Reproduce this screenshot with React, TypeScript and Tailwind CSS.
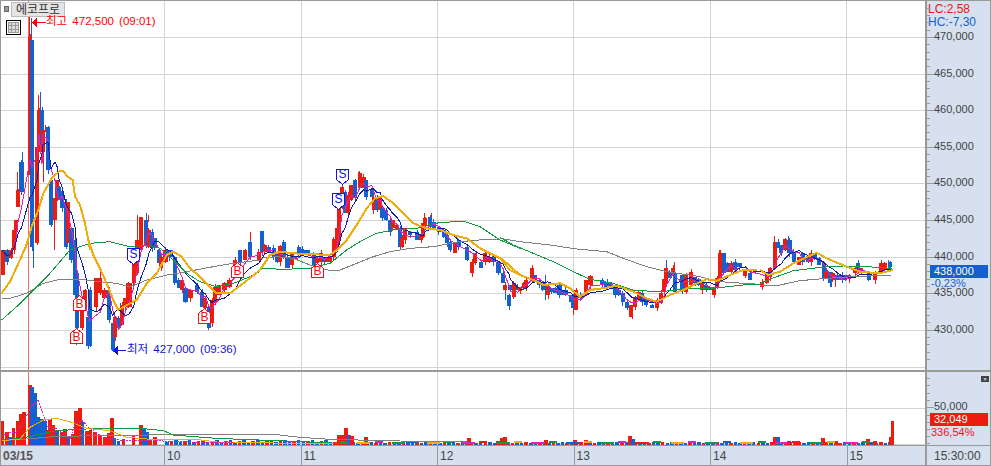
import React from "react";

type Row = [number, number, number, number, string];
type C = { x: number; w: number; t: number; b: number; c: string };

const seg = (ox: number, oy: number, rows: Row[], s = 3): C[] =>
  rows.map(([a, b, t, bo, c]) => ({ x: ox + a / s, w: Math.max(4, (b - a) / s), t: oy + t / s, b: oy + bo / s, c }));

const candles: C[] = [
  ...seg(0, 0, [
    [0, 5, 250, 275, "r"], [5, 8, 250, 262, "b"], [9, 12, 250, 258, "r"], [12, 15, 230, 250, "r"], [14, 17, 220, 232, "r"],
    [16, 19, 190, 207, "r"], [19, 24, 162, 192, "b"], [28, 30, 37, 175, "r"], [30, 33, 40, 247, "b"], [35, 38, 147, 243, "r"],
    [37, 40, 110, 152, "r"], [40, 42, 110, 152, "b"], [41, 45, 130, 152, "r"], [46, 49, 127, 170, "b"], [49, 53, 180, 225, "b"],
    [53, 56, 198, 220, "r"], [55, 57, 180, 198, "r"], [57, 60, 187, 198, "b"], [60, 63, 191, 208, "b"], [64, 67, 202, 247, "b"],
    [66, 69, 202, 243, "r"], [69, 74, 228, 260, "b"], [73, 77, 240, 295, "b"],
  ], 1),
  ...seg(0, 240, [
    [225, 233, 100, 265, "b"], [240, 250, 180, 265, "r"], [250, 258, 150, 200, "r"], [258, 266, 230, 318, "b"], [264, 275, 150, 318, "b"],
    [283, 295, 115, 200, "r"], [295, 305, 115, 160, "r"], [305, 320, 150, 175, "r"], [322, 330, 150, 240, "b"], [332, 340, 250, 330, "b"],
    [340, 350, 230, 290, "r"], [350, 358, 235, 265, "b"], [360, 370, 195, 255, "r"], [370, 378, 175, 200, "r"], [378, 395, 130, 200, "r"],
    [395, 405, 70, 130, "r"], [405, 415, 0, 100, "r"], [418, 430, -69, 30, "r"], [432, 442, -60, 15, "b"], [440, 448, -30, 20, "r"],
    [450, 458, -25, 25, "b"], [458, 470, -5, 25, "b"], [470, 480, 30, 70, "b"], [478, 490, 50, 85, "r"], [490, 503, 30, 65, "r"],
    [497, 520, 30, 50, "b"], [518, 530, 50, 130, "b"], [530, 540, 120, 145, "b"], [540, 550, 120, 150, "r"], [550, 565, 145, 185, "b"],
    [565, 580, 150, 175, "r"], [585, 595, 135, 155, "b"], [600, 610, 155, 200, "b"], [610, 620, 175, 205, "r"], [620, 630, 200, 265, "b"],
    [630, 640, 180, 250, "r"], [640, 650, 140, 190, "r"], [650, 660, 135, 165, "r"], [665, 680, 130, 150, "r"], [680, 695, 120, 140, "r"],
    [700, 710, 60, 100, "r"], [715, 725, 30, 65, "b"], [730, 740, 30, 60, "r"], [745, 755, 5, 50, "b"], [770, 780, 35, 60, "r"],
  ]),
  ...seg(260, 160, [
    [0, 8, 213, 275, "b"], [8, 20, 255, 275, "r"], [20, 30, 260, 275, "b"], [35, 45, 265, 290, "b"], [45, 55, 275, 305, "b"],
    [55, 65, 258, 305, "r"], [65, 75, 245, 290, "b"], [75, 90, 290, 325, "b"], [90, 100, 280, 315, "r"], [100, 110, 290, 295, "r"],
    [110, 120, 260, 280, "b"], [120, 132, 268, 282, "b"], [132, 150, 270, 285, "b"], [155, 165, 280, 315, "b"], [165, 178, 295, 310, "r"],
    [178, 190, 280, 305, "r"], [186, 195, 290, 305, "b"], [195, 215, 290, 305, "r"], [215, 225, 238, 290, "r"], [224, 238, 205, 270, "r"],
    [232, 242, 140, 240, "r"], [240, 250, 80, 140, "r"], [250, 258, 95, 160, "b"], [258, 270, 105, 160, "r"], [268, 280, 75, 120, "r"],
    [280, 290, 60, 115, "b"], [293, 305, 40, 85, "r"], [305, 315, 50, 85, "r"], [312, 322, 60, 110, "b"], [330, 338, 90, 110, "b"],
    [335, 345, 110, 150, "r"], [345, 355, 115, 150, "b"], [355, 365, 110, 150, "r"], [360, 370, 145, 175, "b"], [372, 382, 150, 180, "b"],
    [385, 395, 180, 215, "b"], [392, 400, 180, 205, "r"], [405, 415, 195, 210, "r"], [415, 425, 205, 260, "b"], [420, 430, 235, 260, "r"],
    [430, 440, 205, 240, "r"], [445, 455, 215, 225, "b"], [465, 478, 215, 240, "b"], [478, 485, 225, 240, "r"], [484, 492, 190, 230, "r"],
    [490, 500, 175, 195, "r"], [505, 515, 170, 200, "b"], [515, 525, 185, 205, "b"], [530, 540, 200, 215, "b"], [545, 555, 210, 230, "b"],
    [555, 565, 225, 250, "b"], [565, 575, 245, 270, "b"], [580, 590, 250, 280, "r"], [590, 600, 240, 260, "b"], [615, 625, 260, 300, "b"],
    [630, 640, 305, 338, "r"], [640, 650, 280, 310, "r"], [658, 668, 305, 325, "b"], [670, 680, 280, 305, "r"], [680, 695, 290, 305, "r"],
    [695, 705, 285, 305, "b"], [708, 722, 305, 340, "b"], [724, 735, 340, 370, "b"], [730, 740, 375, 390, "r"], [745, 755, 375, 390, "b"],
  ]),
  ...seg(500, 220, [
    [22, 32, 225, 257, "b"], [35, 45, 190, 232, "r"], [47, 55, 200, 210, "b"], [55, 65, 200, 212, "r"], [65, 75, 190, 205, "r"],
    [72, 85, 180, 200, "r"], [90, 100, 145, 180, "r"], [100, 110, 165, 185, "b"], [112, 122, 180, 195, "b"], [122, 132, 190, 210, "b"],
    [138, 148, 198, 225, "r"], [148, 158, 205, 215, "b"], [160, 172, 205, 220, "b"], [172, 185, 195, 225, "b"], [185, 205, 210, 225, "b"],
    [208, 218, 225, 245, "b"], [213, 223, 225, 265, "b"], [223, 233, 210, 270, "r"], [235, 250, 225, 235, "b"], [252, 265, 180, 225, "r"],
    [265, 280, 167, 195, "r"], [300, 312, 180, 195, "b"], [312, 335, 187, 205, "b"], [340, 350, 205, 225, "b"], [350, 360, 210, 225, "b"],
    [362, 375, 220, 245, "b"], [375, 385, 245, 265, "b"], [388, 398, 255, 290, "r"], [400, 412, 232, 260, "r"], [410, 420, 215, 240, "r"],
    [420, 430, 220, 245, "b"], [432, 442, 235, 255, "b"], [450, 462, 255, 265, "b"], [465, 475, 240, 265, "r"], [477, 487, 220, 250, "r"],
    [487, 497, 178, 215, "r"], [493, 503, 145, 190, "r"], [503, 513, 155, 175, "b"], [513, 523, 145, 165, "r"], [520, 530, 160, 215, "b"],
    [540, 548, 165, 210, "b"], [553, 563, 165, 215, "r"], [568, 580, 155, 195, "r"], [580, 590, 170, 190, "b"], [590, 600, 180, 195, "b"],
    [600, 610, 190, 210, "r"], [612, 622, 195, 210, "b"], [625, 635, 200, 210, "b"], [637, 647, 205, 225, "r"], [645, 655, 175, 205, "r"],
    [655, 665, 100, 175, "r"], [665, 675, 100, 160, "b"], [675, 685, 130, 155, "b"], [688, 697, 130, 155, "r"], [700, 710, 125, 150, "b"],
    [712, 725, 130, 140, "b"], [730, 740, 150, 168, "r"], [745, 755, 160, 180, "b"],
  ]),
  ...seg(760, 230, [
    [0, 8, 155, 170, "r"], [14, 24, 130, 160, "r"], [24, 36, 115, 140, "r"], [38, 48, 35, 115, "r"], [48, 58, 35, 55, "b"],
    [58, 68, 45, 70, "b"], [70, 82, 28, 60, "r"], [82, 95, 30, 70, "b"], [95, 108, 65, 95, "b"], [112, 122, 80, 105, "r"],
    [122, 132, 70, 95, "b"], [138, 148, 80, 95, "b"], [148, 160, 70, 95, "r"], [158, 170, 70, 85, "b"], [172, 182, 85, 105, "b"],
    [185, 195, 100, 145, "b"], [192, 202, 125, 145, "r"], [204, 214, 125, 160, "b"], [212, 222, 130, 150, "r"], [225, 240, 135, 150, "b"],
    [240, 250, 135, 150, "b"], [250, 262, 135, 150, "b"], [262, 272, 135, 148, "r"], [280, 290, 115, 130, "r"], [288, 298, 100, 120, "b"],
    [298, 306, 115, 125, "r"], [320, 330, 125, 150, "b"], [340, 350, 130, 150, "r"], [358, 368, 100, 125, "r"], [368, 378, 100, 120, "r"],
    [385, 395, 95, 110, "b"],
  ]),
];

const wicks: [number, number, number, string][] = [
  [29, 14, 37, "r"], [31.5, 18, 40, "b"], [38.5, 95, 110, "r"], [40.5, 92, 110, "b"], [45, 125, 132, "r"], [22, 152, 162, "b"],
  [17.5, 172, 190, "r"], [54.5, 220, 250, "r"], [43, 150, 182, "r"], [33.5, 240, 268, "b"], [76.5, 328, 345, "b"], [137, 215, 240, "r"],
  [146, 213, 220, "b"], [113, 345, 352, "b"], [208, 325, 330, "r"], [424, 213, 220, "r"], [431, 213, 220, "r"], [100, 272, 280, "r"],
  [505, 290, 300, "b"], [545, 275, 300, "b"], [573, 300, 315, "r"], [632, 305, 319, "r"], [666, 260, 268, "b"], [674, 262, 270, "r"],
  [719, 250, 256, "r"], [774, 236, 250, "r"], [788, 236, 245, "b"], [831, 275, 287, "b"], [835, 278, 287, "r"], [884, 262, 268, "r"],
  [888, 260, 266, "b"], [250, 232, 240, "r"], [342, 180, 190, "b"], [358, 172, 176, "r"], [120, 303, 315, "b"], [148, 215, 222, "r"],
];

const poly = (ox: number, oy: number, pts: number[][]) => pts.map(([x, y]) => `${ox + x / 3},${oy + y / 3}`).join(" ");

const orange = [
  poly(0, 240, [[5, 160], [30, 125], [60, 60], [85, 0]]),
  poly(0, 130, [[75, 360], [95, 290], [115, 240], [130, 190], [155, 145], [180, 122], [190, 122], [200, 138], [218, 150], [225, 200], [240, 225], [255, 280], [265, 330], [270, 360]]),
  poly(0, 240, [[265, 0], [280, 45], [300, 85], [320, 130], [340, 180], [355, 210], [375, 198], [410, 180], [440, 130], [470, 100], [500, 45], [520, 35], [545, 50], [570, 85], [600, 110], [630, 140], [650, 160], [690, 160], [730, 130], [780, 90]]),
  poly(260, 160, [[0, 330], [30, 285], [60, 275], [100, 280], [210, 285], [230, 270], [260, 240], [290, 195], [320, 145], [345, 115], [370, 108], [400, 130], [430, 160], [460, 190], [500, 205], [540, 210], [580, 225], [620, 235], [660, 265], [700, 285], [730, 300], [780, 345]]),
  poly(500, 220, [[0, 115], [30, 150], [60, 165], [100, 180], [130, 195], [180, 190], [210, 205], [240, 230], [270, 210], [320, 203], [350, 197], [400, 215], [440, 235], [470, 245], [510, 225], [550, 210], [580, 195], [620, 178], [650, 182], [690, 165], [730, 150], [770, 150]]),
  poly(760, 230, [[0, 120], [25, 135], [60, 125], [100, 100], [170, 68], [200, 85], [260, 110], [300, 125], [360, 130], [398, 120]]),
];
const gray = [
  poly(0, 240, [[5, 175], [30, 175], [80, 160], [130, 130], [180, 118], [240, 118], [300, 125], [350, 130], [390, 140], [440, 120], [500, 105], [560, 95], [640, 80], [700, 70], [780, 60]]),
  poly(260, 160, [[0, 295], [50, 290], [100, 295], [150, 315], [210, 332], [240, 330], [290, 310], [340, 290], [390, 275], [450, 265], [520, 260], [600, 245], [680, 238], [720, 240]]),
  poly(500, 220, [[0, 55], [60, 65], [150, 75], [230, 87], [320, 95], [370, 115], [440, 140], [500, 155], [600, 170], [660, 185], [730, 190], [780, 193]]),
  poly(760, 230, [[0, 165], [60, 165], [120, 152], [200, 145], [280, 140], [395, 135]]),
];
const green = [
  poly(0, 240, [[5, 240], [50, 200], [100, 150], [150, 100], [210, 30], [270, 10], [330, 5], [390, 20], [440, 15], [480, 25], [520, 60], [560, 100], [600, 125], [650, 140], [700, 130], [750, 110], [780, 95]]),
  poly(260, 160, [[0, 325], [70, 328], [150, 325], [210, 310], [260, 270], [300, 245], [350, 220], [400, 210], [470, 205], [520, 190], [610, 183], [660, 200], [720, 240], [780, 265]]),
  poly(500, 220, [[0, 52], [40, 75], [100, 100], [160, 125], [220, 155], [270, 178], [340, 190], [400, 210], [480, 216], [560, 205], [640, 205], [730, 195], [780, 192]]),
  poly(760, 230, [[0, 160], [50, 140], [100, 122], [180, 112], [250, 108], [320, 110], [395, 115]]),
];

const sorted = [...candles].sort((a, b) => a.x - b.x);
const mids = sorted.map((c) => ({ x: c.x + c.w / 2, y: c.c === "r" ? c.t : c.b }));
const sma = (n: number) =>
  mids
    .map((_, i) => {
      const from = Math.max(0, i - n + 1);
      const part = mids.slice(from, i + 1);
      const y = part.reduce((s, p) => s + p.y, 0) / part.length;
      return `${mids[i].x.toFixed(1)},${y.toFixed(1)}`;
    })
    .join(" ");

const vLines = [164, 301, 437, 573, 710, 846];
const prices = [470, 465, 460, 455, 450, 445, 440, 435, 430];
const priceY = (p: number) => 37 + ((470 - p) / 5) * 36.6;

const RED = "#ec1c0e";
const BLUE = "#1560cf";

type Vol = [number, number, string];
const v4: Vol[] = [
  [0, 185, "r"], [15, 218, "r"], [25, 235, "b"], [35, 207, "r"], [47, 185, "r"], [62, 178, "b"], [57, 165, "r"], [67, 158, "r"], [84, 78, "r"],
  [90, 85, "b"], [100, 103, "b"], [110, 175, "b"], [120, 180, "b"], [130, 185, "b"], [137, 212, "r"], [145, 180, "r"], [155, 198, "r"], [165, 212, "b"],
  [180, 220, "r"], [190, 210, "r"], [200, 235, "b"], [212, 225, "r"], [222, 155, "r"], [234, 147, "r"], [242, 190, "b"], [255, 215, "r"], [266, 212, "r"],
  [280, 220, "r"], [295, 230, "r"], [310, 235, "r"], [320, 222, "r"], [330, 177, "r"], [338, 238, "b"], [350, 245, "b"], [365, 240, "r"], [395, 228, "r"],
  [417, 198, "r"], [427, 210, "b"], [435, 220, "b"], [445, 240, "r"], [460, 235, "r"],
];
const bumps: [number, number, string][] = [
  [337, 436, "r"], [340, 436, "r"], [344, 429, "r"], [347, 436, "b"], [350, 437, "r"], [364, 438, "r"], [467, 439, "r"], [496, 442, "r"], [500, 439, "r"],
  [503, 438, "r"], [544, 441, "r"], [573, 441, "r"], [584, 441, "r"], [628, 437, "r"], [631, 440, "b"], [773, 438, "r"], [776, 438, "b"], [787, 442, "r"],
  [793, 442, "r"], [821, 439, "r"], [834, 442, "r"], [866, 440, "r"], [873, 442, "r"], [889, 438, "r"],
];
const low = Array.from({ length: 160 }, (_, i) => {
  const x = 165 + i * 4.55;
  const h = x < 330 ? 3 + (i % 3) : 2 + (i % 2);
  return [x, 446 - h, i % 3 === 1 ? "r" : "b"] as [number, number, string];
});
const stripeCols = ["#0f9a40", "#f0ac08", "#e020b8", "#0f9a40", "#1560cf", "#f0ac08", "#0f9a40", "#e020b8", "#ec1c0e"];
const stripe = Array.from({ length: 31 }, (_, i) => ({
  x: 340 + i * 17.4,
  w: 8 + ((i * 5) % 10),
  y: 442 + (i % 2),
  c: stripeCols[i % stripeCols.length],
}));

const volMag = poly(0, 360, [[0, 230], [25, 222], [50, 220], [70, 190], [90, 150], [115, 122], [130, 170], [145, 205], [170, 210], [210, 240], [225, 195], [245, 183], [265, 205], [310, 235], [340, 240], [375, 245], [420, 245], [460, 245], [600, 250], [700, 252]]);
const volOra = poly(0, 360, [[5, 245], [60, 240], [90, 205], [130, 183], [170, 178], [215, 190], [260, 208], [330, 215], [380, 235], [440, 240], [580, 240], [660, 250], [900, 253], [1000, 254]]);
const volGrn = poly(0, 360, [[5, 243], [60, 238], [100, 230], [170, 215], [260, 210], [420, 208], [490, 215], [520, 228], [650, 238], [900, 248], [990, 252], [1050, 254]]);
const volGry = poly(0, 360, [[5, 245], [80, 240], [170, 232], [510, 227], [830, 227], [900, 235], [990, 241], [1200, 246], [1400, 249]]);

function House({ x, y, w, h, label, up }: { x: number; y: number; w: number; h: number; label: string; up: boolean }) {
  const col = up ? "#f01018" : "#1010e8";
  const a = x + 0.5;
  const b = y + 0.5;
  const pts = up
    ? `${a},${b + 5} ${a + w / 2},${b} ${a + w},${b + 5} ${a + w},${b + h} ${a},${b + h}`
    : `${a},${b} ${a + w},${b} ${a + w},${b + h - 5} ${a + w / 2},${b + h} ${a},${b + h - 5}`;
  return (
    <g>
      <polygon points={pts} fill="#fff" stroke={col} strokeWidth="1" />
      <text x={x + w / 2 + 0.5} y={up ? y + h - 2 : y + h - 6} textAnchor="middle" fontSize="12" fill={col} fontFamily="'Liberation Sans', sans-serif">
        {label}
      </text>
    </g>
  );
}

export default function App() {
  return (
    <div className="w-[991px] h-[466px] flex flex-col border border-[#999] bg-white overflow-hidden font-['Liberation_Sans','Noto_Sans_CJK_KR',sans-serif] text-[11px] leading-none text-[#444]">
      {/* price pane */}
      <div className="flex h-[371px] border-b-2 border-[#999]">
        <div className="relative w-[924px] h-full">
          <svg width="924" height="369" viewBox="1 1 924 369" shapeRendering="crispEdges" className="block">
            {prices.map((p) => (
              <line key={p} x1="1" x2="925" y1={Math.round(priceY(p)) + 0.5} y2={Math.round(priceY(p)) + 0.5} stroke="#d4d4d4" />
            ))}
            <line x1="1" x2="925" y1="367.5" y2="367.5" stroke="#d4d4d4" />
            {vLines.map((x) => (
              <line key={x} x1={x + 0.5} x2={x + 0.5} y1="1" y2="372" stroke="#d4d4d4" />
            ))}
            <line x1="28.5" x2="28.5" y1="1" y2="372" stroke="#f06a6a" />
            {wicks.map(([x, a, b, c], i) => (
              <line key={i} x1={x} x2={x} y1={a} y2={b} stroke={c === "r" ? RED : BLUE} />
            ))}
            {candles.map((c, i) => (
              <g key={i}>
                <line
                  x1={c.x + c.w / 2}
                  x2={c.x + c.w / 2}
                  y1={c.t - (i * 5) % 4}
                  y2={c.b + (i * 3) % 5}
                  stroke={c.c === "r" ? RED : BLUE}
                />
                <rect x={c.x} y={c.t} width={c.w} height={c.b - c.t} fill={c.c === "r" ? RED : BLUE} />
              </g>
            ))}
            <polyline points={sma(4)} fill="none" stroke="#e020b8" strokeWidth="1" />
            <polyline points={sma(7)} fill="none" stroke="#101f9e" strokeWidth="1" />
            {gray.map((p, i) => (
              <polyline key={i} points={p} fill="none" stroke="#808080" strokeWidth="1" />
            ))}
            {green.map((p, i) => (
              <polyline key={i} points={p} fill="none" stroke="#0f9a40" strokeWidth="1" />
            ))}
            {orange.map((p, i) => (
              <polyline key={i} points={p} fill="none" stroke="#f0ac08" strokeWidth="2" />
            ))}
            <House x={70} y={328} w={12} h={15} label="B" up />
            <House x={73} y={295} w={12} h={15} label="B" up />
            <House x={198} y={308} w={12} h={15} label="B" up />
            <House x={231} y={262} w={12} h={15} label="B" up />
            <House x={311} y={263} w={12} h={14} label="B" up />
            <House x={127} y={248} w={12} h={16} label="S" up={false} />
            <House x={336} y={169} w={12} h={15} label="S" up={false} />
            <House x={332} y={193} w={12} h={16} label="S" up={false} />
            <polygon points="32,22 37,17 37,28" fill="#f00" />
            <line x1="36" x2="46" y1="22.5" y2="22.5" stroke="#f00" />
            <polygon points="113,350 118,345 118,356" fill="#1212d8" />
            <line x1="117" x2="126" y1="350.5" y2="350.5" stroke="#1212d8" />
          </svg>

          <div className="absolute left-[3px] top-[5px] w-[5px] h-[6px] bg-[#999] border border-[#666]" />
          <div className="absolute left-[10px] top-[1px] w-[54px] h-[15px] bg-[#e4e4e4] border border-[#bbb] flex items-center justify-center text-[12px] text-[#333]">
            에코프로
          </div>
          <div className="absolute left-[5px] top-[19px] w-[15px] h-[15px] border border-black bg-white p-[1px]">
            <div className="w-full h-full bg-[#999] grid grid-cols-3 grid-rows-3 gap-[1px] p-[1px]">
              {Array.from({ length: 9 }, (_, i) => (
                <div key={i} className="bg-[#ddd]" />
              ))}
            </div>
          </div>
          <div className="absolute left-[45px] top-[15px] text-[11.5px] text-[#f00] whitespace-nowrap [word-spacing:2px]">최고 472,500 (09:01)</div>
          <div className="absolute left-[126px] top-[343px] text-[11.5px] text-[#1212d8] whitespace-nowrap [word-spacing:2px]">최저 427,000 (09:36)</div>
        </div>

        <div className="relative flex-1 bg-[#d6e0ee] border-l-2 border-[#999] flex flex-col pt-[1px]">
          <svg width="8" height="369" viewBox="926 1 8 369" className="absolute left-0 top-0" shapeRendering="crispEdges">
            {Array.from({ length: 50 }, (_, i) => {
              const y = Math.round(37 + (i - 5) * 7.32) + 0.5;
              return <line key={i} x1="926" x2={i % 5 === 0 ? 933 : 929} y1={y} y2={y} stroke="#999" />;
            })}
          </svg>
          <div className="h-[13px] pl-[1px] flex items-center text-[12px] text-[#f01414]">LC:2,58</div>
          <div className="h-[13px] pl-[1px] flex items-center text-[12px] text-[#1560cf]">HC:-7,30</div>
          <div className="flex flex-col gap-[23.6px] mt-[2px] pl-[7px]">
            {prices.map((p) => (
              <div key={p} className="h-[13px] flex items-center">
                {p},000
              </div>
            ))}
          </div>
          <div className="absolute left-[3px] top-[264px] w-[58px] h-[13px] bg-[#1560cf] text-white pl-[4px] leading-[13px]">438,000</div>
          <div className="absolute left-[4px] top-[277px] text-[#1560cf]">-0,23%</div>
        </div>
      </div>

      {/* volume pane */}
      <div className="flex h-[74px] border-b border-[#999]">
        <div className="w-[924px] h-full">
          <svg width="924" height="73" viewBox="1 373 924 73" shapeRendering="crispEdges" className="block">
            <line x1="1" x2="925" y1="409.5" y2="409.5" stroke="#d4d4d4" />
            <line x1="1" x2="925" y1="445.5" y2="445.5" stroke="#d4d4d4" />
            {vLines.map((x) => (
              <line key={x} x1={x + 0.5} x2={x + 0.5} y1="373" y2="446" stroke="#d4d4d4" />
            ))}
            <line x1="28.5" x2="28.5" y1="373" y2="446" stroke="#f06a6a" />
            {low.map(([x, t, c], i) => (
              <rect key={i} x={x} y={t} width="3.5" height={446 - t} fill={c === "r" ? RED : BLUE} />
            ))}
            {v4.map(([x, t, c], i) => (
              <rect key={i} x={x / 3} y={360 + t / 3} width="3.5" height={86 - t / 3} fill={c === "r" ? RED : BLUE} />
            ))}
            {bumps.map(([x, t, c], i) => (
              <rect key={i} x={x} y={t} width="3.5" height={446 - t} fill={c === "r" ? RED : BLUE} />
            ))}
            <rect x="891" y="422" width="3" height="24" fill={RED} />
            {stripe.map((s, i) => (
              <rect key={i} x={s.x} y={s.y} width={s.w} height="1.5" fill={s.c} />
            ))}
            <polyline points={volGry} fill="none" stroke="#808080" />
            <polyline points={volGrn} fill="none" stroke="#0f9a40" />
            <polyline points={volOra} fill="none" stroke="#f0ac08" />
            <polyline points={volMag} fill="none" stroke="#e020b8" strokeDasharray="2 1" />
          </svg>
        </div>
        <div className="relative flex-1 bg-[#d6e0ee] border-l-2 border-[#999] flex flex-col">
          <svg width="8" height="73" viewBox="926 373 8 73" className="absolute left-0 top-0" shapeRendering="crispEdges">
            {[379, 386, 394, 401, 408, 416, 423, 430, 437, 444].map((y) => (
              <line key={y} x1="926" x2={y === 408 ? 933 : 929} y1={y + 0.5} y2={y + 0.5} stroke="#999" />
            ))}
          </svg>
          <div className="self-end mr-[1px] mt-[4px] w-[8px] h-[6px] bg-[#444] flex items-center justify-center text-white text-[6px]">×</div>
          <div className="mt-[18px] ml-[7px] h-[13px] flex items-center">50,000</div>
          <div className="ml-[3px] w-[58px] h-[13px] bg-[#ec1c0e] text-white pl-[4px] flex items-center">32,049</div>
          <div className="ml-[4px] h-[13px] flex items-center text-[#f01414]">336,54%</div>
        </div>
      </div>

      {/* time axis */}
      <div className="flex flex-1 bg-[#d6e0ee] text-[12px]">
        <div className="w-[163px] pl-[2px] flex items-center font-bold text-[#555]">03/15</div>
        {["10", "11", "12", "13", "14"].map((t) => (
          <div key={t} className="w-[136.5px] border-l border-[#999] pl-[2px] flex items-center">
            {t}
          </div>
        ))}
        <div className="w-[78.5px] border-l border-[#999] pl-[2px] flex items-center">15</div>
        <div className="flex-1 border-l-2 border-[#999] flex items-center pl-[7px]">15:30:00</div>
      </div>
    </div>
  );
}
